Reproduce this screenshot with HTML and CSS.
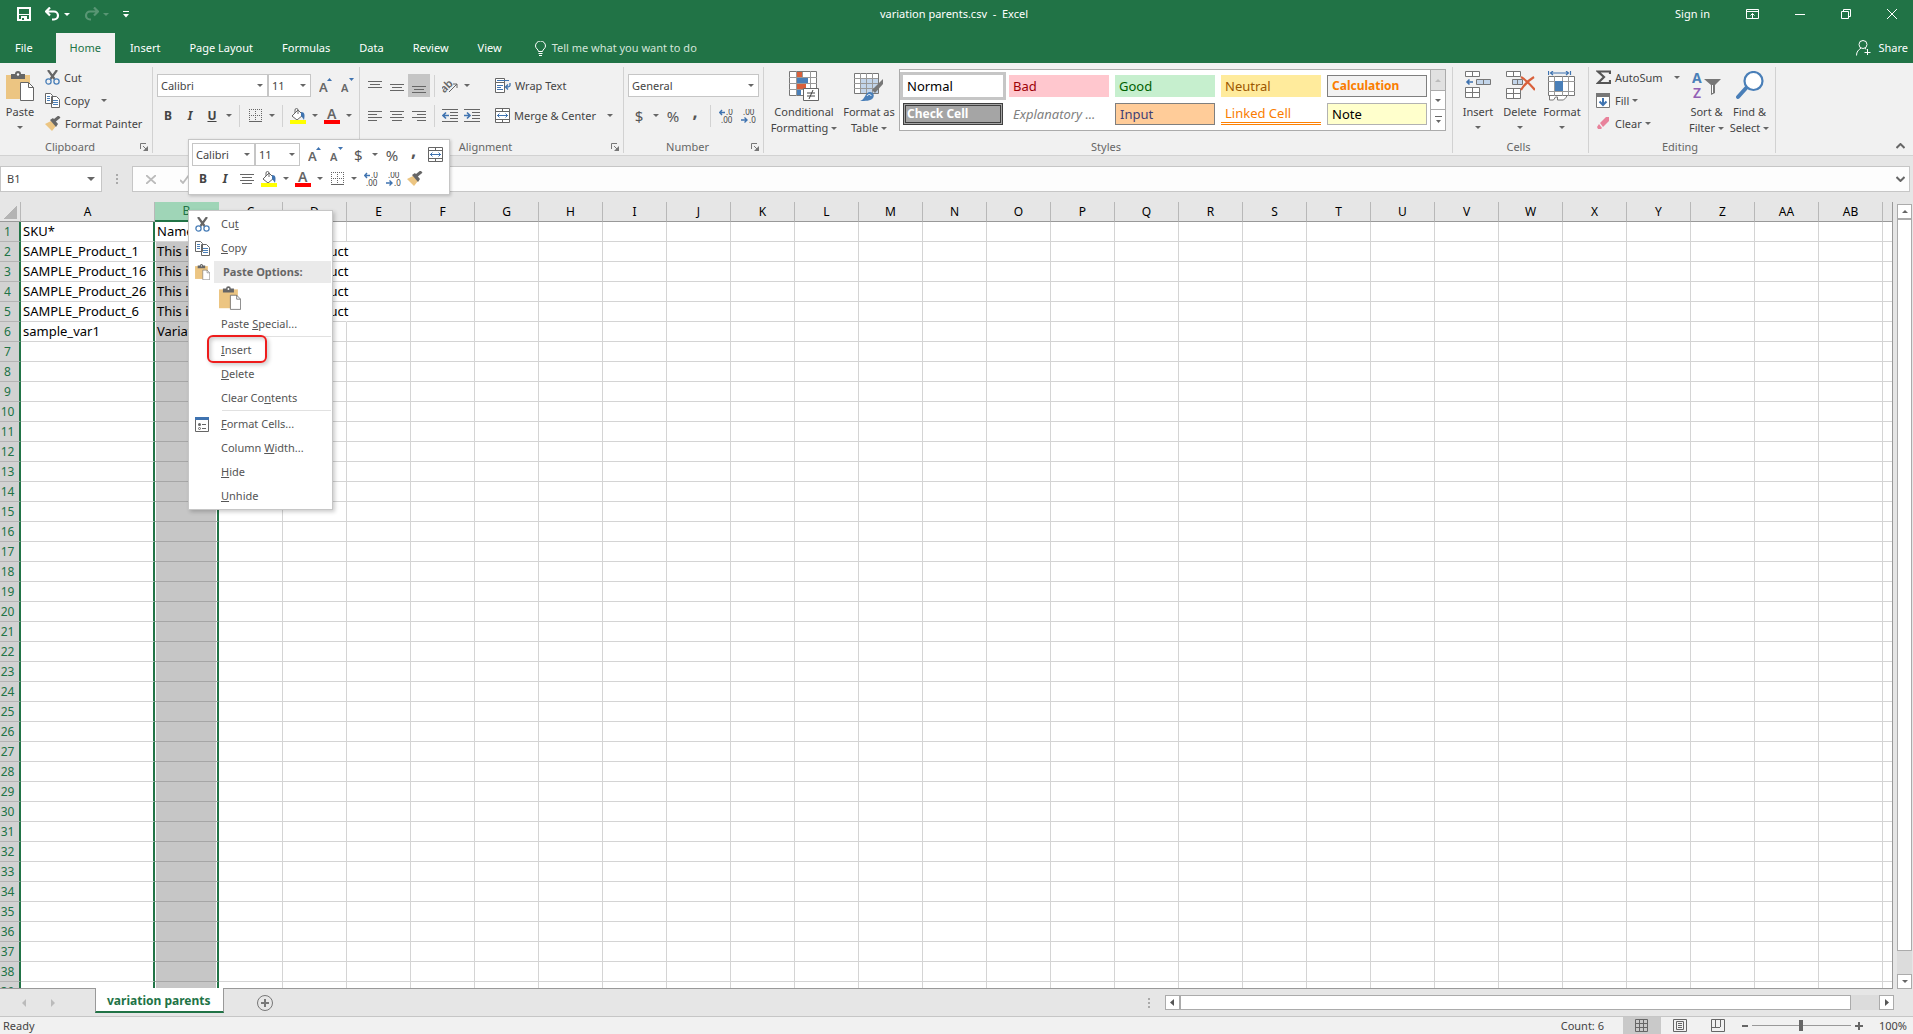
FILE: index.html
```html
<!DOCTYPE html>
<html lang="en">
<head>
  <meta charset="UTF-8">
  <meta name="viewport" content="width=device-width, initial-scale=1.0">
  <title>variation parents.csv - Excel</title>
  <link rel="stylesheet" href="styles.css">
</head>
<body>

<!-- shared icons -->
<svg class="sprite" aria-hidden="true">
  <symbol id="i-cut" viewBox="0 0 15 15"><path d="M3 0l6.500 9M12 0L5.500 9" stroke="#666" stroke-width="2.200" fill="none"/><circle cx="3.500" cy="11.500" r="2.600" fill="none" stroke="#4a7fb8" stroke-width="1.300"/><circle cx="11.500" cy="11.500" r="2.600" fill="none" stroke="#4a7fb8" stroke-width="1.300"/></symbol>
  <symbol id="i-copy" viewBox="0 0 15 15"><path d="M.5.500h5l2 2v8h-7zM6.500 3.500h5l3 3v8h-8z" fill="#fff" stroke="#666"/><path d="M2 3.500h3M2 5.500h3M2 7.500h3M8 7.500h5M8 9.500h5M8 11.500h5" stroke="#4a7fb8"/></symbol>
  <symbol id="i-paste" viewBox="0 0 28 30"><path d="M0 4h24v24H0z" fill="#ecc582"/><path d="M5 3h4a3 3 0 0 1 6 0h4v5H5z" fill="#666"/><circle cx="12" cy="3.500" r="1.200" fill="#fff"/><path d="M14.500 11.500h8l5 5v13h-13z" fill="#fff" stroke="#666"/><path d="M22.500 11.500v5h5" fill="none" stroke="#666"/></symbol>
  <symbol id="i-brush" viewBox="0 0 16 15"><path d="M0 8l6-3 5 5-4 5z" fill="#ecc582"/><path d="M5 4l3-2 5 6-2 3z" fill="#666"/><path d="M9 5l5.500-4.500" stroke="#666" stroke-width="3"/></symbol>
  <symbol id="i-launch" viewBox="0 0 8 8"><path d="M.5 6V.5H6" fill="none" stroke="#777"/><path d="M3 3l3 3" stroke="#777"/><path d="M8 3v5H3z" fill="#777"/></symbol>
  <symbol id="i-grow" viewBox="0 0 14 15"><text x="0" y="14" font-size="13" font-weight="600" fill="#666">A</text><path d="M8 3h5l-2.500-3z" fill="#3f73b0"/></symbol>
  <symbol id="i-shrink" viewBox="0 0 14 15"><text x="0" y="14" font-size="11" font-weight="600" fill="#666">A</text><path d="M8 0h5l-2.500 3z" fill="#3f73b0"/></symbol>
  <symbol id="i-border" viewBox="0 0 13 13"><path d="M.5 0v13M6.500 0v13M12.500 0v13M0 .5h13M0 6.500h13" stroke="#666" stroke-dasharray="1 1" fill="none"/><path d="M0 12.500h13" stroke="#666"/></symbol>
  <symbol id="i-fill" viewBox="0 0 16 16"><path d="M2 8l6-6 5 5-6 5z" fill="#fff" stroke="#666"/><path d="M5 5V2a1.500 1.500 0 0 1 3 0v4" fill="none" stroke="#666"/><path d="M11 4c4 0 4 3 3 8-1-2-2-3-3-4z" fill="#3f73b0"/><path d="M0 12h16v4H0z" fill="#ff0"/></symbol>
  <symbol id="i-color" viewBox="0 0 16 16"><text x="3" y="11" font-size="14" font-weight="600" fill="#666">A</text><path d="M0 12h16v4H0z" fill="#f00"/></symbol>
  <symbol id="i-top" viewBox="0 0 14 14"><path d="M0 3.500h14M2 6.500h10M0 9.500h14" stroke="#666"/></symbol>
  <symbol id="i-bottom" viewBox="0 0 14 14"><path d="M0 6.500h14M2 9.500h10M0 12.500h14" stroke="#666"/></symbol>
  <symbol id="i-left" viewBox="0 0 14 14"><path d="M0 2.500h14M0 5.500h9M0 8.500h14M0 11.500h9" stroke="#666"/></symbol>
  <symbol id="i-center" viewBox="0 0 14 14"><path d="M0 2.500h14M2 5.500h10M0 8.500h14M2 11.500h10" stroke="#666"/></symbol>
  <symbol id="i-right" viewBox="0 0 14 14"><path d="M0 2.500h14M5 5.500h9M0 8.500h14M5 11.500h9" stroke="#666"/></symbol>
  <symbol id="i-orient" viewBox="0 0 16 15"><text x="-3" y="11" font-size="11" font-weight="600" fill="#666" transform="rotate(-45 5 7)">ab</text><path d="M7 14l8-8M11 6h4v4" stroke="#666" fill="none"/></symbol>
  <symbol id="i-outdent" viewBox="0 0 16 13"><path d="M0 .5h16M8 3.500h8M8 6.500h8M8 9.500h8M0 12.500h16" stroke="#666"/><path d="M7 6.500H1M4 3.500l-3 3 3 3" stroke="#3f73b0" stroke-width="1.600" fill="none"/></symbol>
  <symbol id="i-indent" viewBox="0 0 16 13"><path d="M0 .5h16M8 3.500h8M8 6.500h8M8 9.500h8M0 12.500h16" stroke="#666"/><path d="M0 6.500h6M3 3.500l3 3-3 3" stroke="#3f73b0" stroke-width="1.600" fill="none"/></symbol>
  <symbol id="i-wrap" viewBox="0 0 16 15"><path d="M.5.500h9v4h-9zM.5 4.500h9v10h-9z" fill="#fff" stroke="#666"/><path d="M2 2.500h12M2 7.500h6M2 9.500h4M2 11.500h6" stroke="#3f73b0"/><path d="M15 5v2.500c0 1-1 1.500-4 1.500M13 6.500L10.500 9l2.500 2.500" stroke="#3f73b0" fill="none" stroke-width="1.300"/></symbol>
  <symbol id="i-merge" viewBox="0 0 15 15"><path d="M.5.500h14v14H.5zM.5 3.500h14M.5 11.500h14M7.500 0v3M7.500 12v3" fill="#fff" stroke="#666"/><path d="M2 7.500h11M4.500 5.500l-2 2 2 2M10.500 5.500l2 2-2 2" stroke="#3f73b0" fill="none"/></symbol>
  <symbol id="i-incdec" viewBox="0 0 15 14"><text x="7" y="6" font-size="8" fill="#444">.0</text><text x="2" y="14" font-size="8" fill="#444">.00</text><path d="M6 3.500H1M3 1L.8 3.500 3 6" stroke="#3f73b0" stroke-width="1.400" fill="none"/></symbol>
  <symbol id="i-decdec" viewBox="0 0 15 14"><text x="2" y="6" font-size="8" fill="#444">.00</text><text x="8" y="14" font-size="8" fill="#444">.0</text><path d="M0 11h5.500M3.500 8.500L6 11l-2.500 2.500" stroke="#3f73b0" stroke-width="1.400" fill="none"/></symbol>
</svg>

<header class="top">
  <div class="titlebar">
    <div class="quick">
      <button aria-label="Save"><svg width="14" height="14"><path d="M1 1h12v12H1z" fill="none" stroke="#fff" stroke-width="2"/><path d="M2 7h10v1H2zM4 9h6v4H4z" fill="#fff"/><path d="M5 11h2v2H5z" fill="#217346"/></svg></button>
      <button class="split" aria-label="Undo"><svg width="15" height="14"><path d="M1 4.500h8a4 4 0 0 1 0 8H7M5 .5L1 4.500l4 4" fill="none" stroke="#fff" stroke-width="2.200"/></svg><i class="caret"></i></button>
      <button class="split faded" aria-label="Redo"><svg width="15" height="14"><path d="M14 4.500H6a4 4 0 0 0 0 8h1M10 .5l4 4-4 4" fill="none" stroke="#fff" stroke-width="2.200"/></svg><i class="caret"></i></button>
      <button aria-label="Customize Quick Access Toolbar"><svg width="6" height="7"><path d="M0 .5h6" stroke="#fff"/><path d="M0 3h6L3 6.500z" fill="#fff"/></svg></button>
    </div>
    <h1>variation parents.csv&nbsp; -&nbsp; Excel</h1>
    <div class="window">
      <a href="#signin">Sign in</a>
      <button aria-label="Ribbon Display Options"><svg width="13" height="10"><path d="M.5.500h12v9H.5zM0 2.500h13M6.500 9V4.500M4.500 6.500l2-2 2 2" fill="none" stroke="#fff"/></svg></button>
      <button aria-label="Minimize"><svg width="10" height="10"><path d="M0 5.500h10" stroke="#fff"/></svg></button>
      <button aria-label="Restore"><svg width="10" height="10"><path d="M.5 2.500h7v7h-7zM2.500 2V.5h7v7H8" fill="none" stroke="#fff"/></svg></button>
      <button aria-label="Close"><svg width="10" height="10"><path d="M0 0l10 10M10 0L0 10" stroke="#fff"/></svg></button>
    </div>
  </div>
  <nav class="tabs">
    <a class="file" href="#file">File</a>
    <a class="active" href="#home">Home</a>
    <a href="#insert">Insert</a>
    <a href="#layout">Page Layout</a>
    <a href="#formulas">Formulas</a>
    <a href="#data">Data</a>
    <a href="#review">Review</a>
    <a href="#view">View</a>
    <a class="tell" href="#tell"><svg width="11" height="15"><path d="M3.500 10.500c0-2-3-3-3-5.500a5 5 0 0 1 10 0c0 2.500-3 3.500-3 5.500zM3.500 12.500h4M4 14.500h3" fill="none" stroke="#fff"/></svg>Tell me what you want to do</a>
    <a class="share" href="#share"><svg width="15" height="16"><circle cx="7" cy="4.500" r="4" fill="none" stroke="#fff"/><path d="M.5 15.500c0-4 2-5.500 4.500-7.500M9 8l1 1.500M11.500 9v6M8.500 12.500h6" fill="none" stroke="#fff"/></svg>Share</a>
  </nav>
</header>

<section class="ribbon">
  <div class="group clipboard">
    <div class="tools">
      <button class="big"><svg width="28" height="30"><use href="#i-paste"/></svg>Paste<i class="caret"></i></button>
      <div class="stack">
        <button class="small"><svg width="15" height="15"><use href="#i-cut"/></svg>Cut</button>
        <button class="small"><svg width="15" height="15"><use href="#i-copy"/></svg>Copy<i class="caret far"></i></button>
        <button class="small"><svg width="16" height="15"><use href="#i-brush"/></svg>Format Painter</button>
      </div>
    </div>
    <div class="caption"><span>Clipboard</span><button aria-label="Clipboard settings"><svg width="8" height="8"><use href="#i-launch"/></svg></button></div>
  </div>

  <div class="group font">
    <div class="tools rows">
      <div class="row">
        <span class="combo face"><select aria-label="Font"><option>Calibri</option></select></span>
        <span class="combo size"><select aria-label="Font size"><option>11</option></select></span>
        <button class="icon first" aria-label="Increase font size"><svg width="14" height="15"><use href="#i-grow"/></svg></button>
        <button class="icon" aria-label="Decrease font size"><svg width="14" height="15"><use href="#i-shrink"/></svg></button>
      </div>
      <div class="row">
        <button class="icon"><b>B</b></button>
        <button class="icon"><b><em>I</em></b></button>
        <button class="icon"><b><u>U</u></b></button>
        <button class="drop" aria-label="Underline style"><i class="caret"></i></button>
        <i class="line"></i>
        <button class="icon" aria-label="Borders"><svg width="13" height="13"><use href="#i-border"/></svg></button>
        <button class="drop" aria-label="Border styles"><i class="caret"></i></button>
        <i class="line"></i>
        <button class="icon" aria-label="Fill color"><svg width="16" height="16"><use href="#i-fill"/></svg></button>
        <button class="drop" aria-label="Fill colors"><i class="caret"></i></button>
        <button class="icon" aria-label="Font color"><svg width="16" height="16"><use href="#i-color"/></svg></button>
        <button class="drop" aria-label="Font colors"><i class="caret"></i></button>
      </div>
    </div>
  </div>

  <div class="group alignment">
    <div class="tools">
      <div class="rows left">
        <div class="row">
          <button class="icon" aria-label="Top align"><svg width="14" height="14"><use href="#i-top" y="-1"/></svg></button>
          <button class="icon" aria-label="Middle align"><svg width="14" height="14"><use href="#i-top" y="2"/></svg></button>
          <button class="icon on" aria-label="Bottom align"><svg width="14" height="14"><use href="#i-bottom" y="1"/></svg></button>
          <i class="line"></i>
          <button class="icon" aria-label="Orientation"><svg width="16" height="15"><use href="#i-orient"/></svg></button>
          <button class="drop" aria-label="Orientation options"><i class="caret"></i></button>
        </div>
        <div class="row">
          <button class="icon" aria-label="Align left"><svg width="14" height="14"><use href="#i-left"/></svg></button>
          <button class="icon" aria-label="Center"><svg width="14" height="14"><use href="#i-center"/></svg></button>
          <button class="icon" aria-label="Align right"><svg width="14" height="14"><use href="#i-right"/></svg></button>
          <i class="line"></i>
          <button class="icon" aria-label="Decrease indent"><svg width="16" height="13"><use href="#i-outdent"/></svg></button>
          <button class="icon" aria-label="Increase indent"><svg width="16" height="13"><use href="#i-indent"/></svg></button>
        </div>
      </div>
      <div class="rows wide">
        <div class="row"><button class="small"><svg width="16" height="15"><use href="#i-wrap"/></svg>Wrap Text</button></div>
        <div class="row"><button class="small"><svg width="15" height="15"><use href="#i-merge"/></svg>Merge &amp; Center<i class="caret far"></i></button></div>
      </div>
    </div>
    <div class="caption"><span>Alignment</span><button aria-label="Alignment settings"><svg width="8" height="8"><use href="#i-launch"/></svg></button></div>
  </div>

  <div class="group number">
    <div class="tools rows">
      <div class="row"><span class="combo format"><select aria-label="Number format"><option>General</option></select></span></div>
      <div class="row">
        <button class="icon sign">$</button>
        <button class="drop" aria-label="Currencies"><i class="caret"></i></button>
        <button class="icon sign">%</button>
        <button class="icon sign comma">,</button>
        <i class="line"></i>
        <button class="icon" aria-label="Increase decimal"><svg width="15" height="14"><use href="#i-incdec"/></svg></button>
        <button class="icon" aria-label="Decrease decimal"><svg width="15" height="14"><use href="#i-decdec"/></svg></button>
      </div>
    </div>
    <div class="caption"><span>Number</span><button aria-label="Number settings"><svg width="8" height="8"><use href="#i-launch"/></svg></button></div>
  </div>

  <div class="group styles">
    <div class="tools">
      <button class="big cond">
        <svg width="30" height="30"><path d="M.5.500h27v24H.5z" fill="#fff" stroke="#777"/><path d="M8 1h6v6H8zM8 13h9v6H8z" fill="#d9603b"/><path d="M8 7h11v6H8zM8 19h4v5H8z" fill="#4a7fb8"/><path d="M7.500 0v25M13.500 1v5M21.500 0v25M0 6.500h28M0 12.500h28M0 18.500h28" stroke="#999" fill="none"/><path d="M14.500 17.500h15v12h-15z" fill="#fff" stroke="#666"/><path d="M18 22h8M18 25h8M24 19l-4 9" stroke="#444"/></svg>
        <span>Conditional<br>Formatting<i class="caret"></i></span>
      </button>
      <button class="big table">
        <svg width="30" height="30"><path d="M.5 2.500h24v20H.5z" fill="#fff" stroke="#777"/><path d="M7 8h17v14H7z" fill="#c3d5ea"/><path d="M6.500 2v20M12.500 2v20M18.500 2v20M0 7.500h24M0 12.500h24M0 17.500h24" stroke="#999" fill="none"/><path d="M29 8v5l-8 9-3-3z" fill="#777"/><path d="M6 30c5-1 5-9 10-9 3 0 5 3 3 6-2 3-8 3-13 3z" fill="#4a7fb8"/><path d="M13 25c1-2 4-2 4 0" fill="none" stroke="#fff"/></svg>
        <span>Format as<br>Table<i class="caret"></i></span>
      </button>
      <div class="gallery">
        <div class="swatches">
          <button class="normal">Normal</button>
          <button class="bad">Bad</button>
          <button class="good">Good</button>
          <button class="neutral">Neutral</button>
          <button class="calc">Calculation</button>
          <button class="check">Check Cell</button>
          <button class="explain">Explanatory ...</button>
          <button class="input">Input</button>
          <button class="linked">Linked Cell</button>
          <button class="note">Note</button>
        </div>
        <div class="pager">
          <button class="dim" aria-label="Previous styles"><i class="caret up"></i></button>
          <button aria-label="Next styles"><i class="caret"></i></button>
          <button aria-label="More styles"><svg width="7" height="8"><path d="M0 .5h7" stroke="#666"/><path d="M1 4h5L3.500 7z" fill="#666"/></svg></button>
        </div>
      </div>
    </div>
    <div class="caption"><span>Styles</span></div>
  </div>

  <div class="group cells">
    <div class="tools">
      <button class="big">
        <svg width="28" height="30"><path d="M1.500.500h14v5h-14zM8.500.500v5M1.500 16.500h14v10h-14zM8.500 16.500v10M1.500 21.500h14" fill="#fff" stroke="#777"/><path d="M12.500 8.500h14v5h-14zM19.500 8.500v5" fill="#c3d5ea" stroke="#777"/><path d="M9 11H3M5.500 8.500L3 11l2.500 2.500" fill="none" stroke="#3f73b0" stroke-width="1.600"/></svg>
        Insert<i class="caret"></i>
      </button>
      <button class="big">
        <svg width="30" height="30"><path d="M1.500.500h14v5h-14zM8.500.500v5M1.500 17.500h14v10h-14zM8.500 17.500v10M1.500 22.500h14" fill="#fff" stroke="#777"/><path d="M7.500 8.500h10v5h-10zM12.500 8.500v5" fill="#c3d5ea" stroke="#777"/><path d="M16 6c5 3 10 8 14 13M29 6c-5 3-10 8-13 13" stroke="#d9603b" stroke-width="2.200" fill="none"/></svg>
        Delete<i class="caret"></i>
      </button>
      <button class="big">
        <svg width="28" height="30"><path d="M.5 0v4M22.500 0v4M2 2h19M5 0L2.500 2 5 4M18 0l2.500 2L18 4" fill="none" stroke="#3f73b0" stroke-width="1.200"/><path d="M.5 5.500h26v19H.5z" fill="#fff" stroke="#777"/><path d="M6.500 5v20M14.500 5v20M20.500 5v20M0 10.500h27M0 20.500h27" stroke="#999" fill="none"/><path d="M7 10h8v10H7z" fill="#4a7fb8"/><path d="M1.500 25v4h4l2-3h2v3h6l3-3v-1" fill="#fff" stroke="#777"/></svg>
        Format<i class="caret"></i>
      </button>
    </div>
    <div class="caption"><span>Cells</span></div>
  </div>

  <div class="group editing">
    <div class="tools">
      <div class="stack">
        <button class="small"><svg width="15" height="15"><path d="M14 4V1.500H2L8 7l-6 6h12v-3" fill="none" stroke="#555" stroke-width="2.200"/></svg>AutoSum<i class="caret far"></i></button>
        <button class="small"><svg width="15" height="15"><path d="M.5.500h13v14H.5z" fill="#fff" stroke="#777"/><path d="M0 0h14v4H0z" fill="#777"/><path d="M7 5v7M3.500 8.500L7 12l3.500-3.500" fill="none" stroke="#3f73b0" stroke-width="2"/></svg>Fill<i class="caret near"></i></button>
        <button class="small"><svg width="15" height="15"><path d="M4 7l6-6h3v4L7 11z" fill="#e8829b"/><path d="M3 8l3 4-1 1H2l-1-2z" fill="#e8829b"/></svg>Clear<i class="caret near"></i></button>
      </div>
      <button class="big">
        <svg width="30" height="30"><text x="0" y="12" font-size="14" font-weight="700" fill="#4a7fb8">A</text><text x="1" y="27" font-size="14" font-weight="600" fill="#9260b5">Z</text><path d="M12 8h17l-6 6v8l-4 2V14z" fill="#777"/><path d="M20.500 14v8" stroke="#fff"/></svg>
        <span>Sort &amp;<br>Filter<i class="caret"></i></span>
      </button>
      <button class="big">
        <svg width="28" height="30"><path d="M2 26L11 16" stroke="#4a7fb8" stroke-width="4" stroke-linecap="round"/><circle cx="17.500" cy="10" r="9" fill="#fff" stroke="#4a7fb8" stroke-width="2.200"/></svg>
        <span>Find &amp;<br>Select<i class="caret"></i></span>
      </button>
    </div>
    <div class="caption"><span>Editing</span></div>
  </div>

  <button class="collapse" aria-label="Collapse the ribbon"><svg width="9" height="6"><path d="M.5 5l4-4 4 4" fill="none" stroke="#666" stroke-width="2"/></svg></button>
</section>

<section class="formula">
  <span class="combo name"><select aria-label="Name box"><option>B1</option></select></span>
  <i class="grip"></i>
  <div class="entry">
    <button aria-label="Cancel"><svg width="10" height="9"><path d="M0 0l10 9M10 0L0 9" stroke="#bbb" stroke-width="1.800"/></svg></button>
    <button aria-label="Enter"><svg width="10" height="9"><path d="M0 5l3 3 6-8" fill="none" stroke="#bbb" stroke-width="1.800"/></svg></button>
    <input type="text" aria-label="Formula bar">
    <button aria-label="Expand formula bar"><svg width="9" height="6"><path d="M.5 1l4 4 4-4" fill="none" stroke="#666" stroke-width="2"/></svg></button>
  </div>
</section>

<main class="sheet">
  <div class="grid"><table id="cells"></table></div>
  <div class="vscroll">
    <button aria-label="Scroll up"><i class="caret up"></i></button>
    <div class="track"><div class="thumb"></div></div>
    <button aria-label="Scroll down"><i class="caret"></i></button>
  </div>
</main>

<section class="sheetbar">
  <div class="nav">
    <button aria-label="Previous sheet"><svg width="4" height="8"><path d="M4 0v8L0 4z" fill="#bbb"/></svg></button>
    <button aria-label="Next sheet"><svg width="4" height="8"><path d="M0 0v8l4-4z" fill="#bbb"/></svg></button>
  </div>
  <button class="tab">variation parents</button>
  <button class="add" aria-label="New sheet"><svg width="16" height="16"><circle cx="8" cy="8" r="7.500" fill="none" stroke="#777"/><path d="M8 4v8M4 8h8" stroke="#777" stroke-width="2"/></svg></button>
  <i class="grip"></i>
  <div class="hscroll">
    <button aria-label="Scroll left"><svg width="4" height="7"><path d="M4 0v7L0 3.500z" fill="#555"/></svg></button>
    <div class="track"><div class="thumb"></div></div>
    <button aria-label="Scroll right"><svg width="4" height="7"><path d="M0 0v7l4-3.500z" fill="#555"/></svg></button>
  </div>
</section>

<footer class="status">
  <span>Ready</span>
  <span class="count">Count: 6</span>
  <button class="view on" aria-label="Normal view"><svg width="13" height="13"><path d="M.5.500h12v12H.5zM4.500 0v13M8.500 0v13M0 4.500h13M0 8.500h13" fill="none" stroke="#666"/></svg></button>
  <button class="view" aria-label="Page layout view"><svg width="14" height="13"><path d="M.5.500h13v12H.5zM3.500 2.500h7v8h-7zM5 4.500h4M5 6.500h4M5 8.500h4" fill="none" stroke="#666"/></svg></button>
  <button class="view" aria-label="Page break view"><svg width="14" height="13"><path d="M.5.500h13v12H.5zM4.500 0v8M9.500 0v8M0 8.500h9" fill="none" stroke="#666"/></svg></button>
  <div class="zoom">
    <button aria-label="Zoom out"><svg width="6" height="8"><path d="M0 4h6" stroke="#666" stroke-width="2"/></svg></button>
    <input type="range" min="0" max="100" value="50" aria-label="Zoom">
    <button aria-label="Zoom in"><svg width="8" height="8"><path d="M0 4h8M4 0v8" stroke="#666" stroke-width="2"/></svg></button>
    <span>100%</span>
  </div>
</footer>

<!-- floating format toolbar -->
<div class="mini">
  <div class="row">
    <span class="combo face"><select aria-label="Font"><option>Calibri</option></select></span>
    <span class="combo size"><select aria-label="Font size"><option>11</option></select></span>
    <button class="icon first" aria-label="Increase font size"><svg width="14" height="15"><use href="#i-grow"/></svg></button>
    <button class="icon" aria-label="Decrease font size"><svg width="14" height="15"><use href="#i-shrink"/></svg></button>
    <button class="icon sign">$</button>
    <button class="drop" aria-label="Currencies"><i class="caret"></i></button>
    <button class="icon sign">%</button>
    <button class="icon sign comma">,</button>
    <button class="icon" aria-label="Merge and center"><svg width="15" height="15"><use href="#i-merge"/></svg></button>
  </div>
  <div class="row">
    <button class="icon"><b>B</b></button>
    <button class="icon"><b><em>I</em></b></button>
    <button class="icon" aria-label="Center"><svg width="14" height="14"><use href="#i-center"/></svg></button>
    <button class="icon" aria-label="Fill color"><svg width="16" height="16"><use href="#i-fill"/></svg></button>
    <button class="drop" aria-label="Fill colors"><i class="caret"></i></button>
    <button class="icon" aria-label="Font color"><svg width="16" height="16"><use href="#i-color"/></svg></button>
    <button class="drop" aria-label="Font colors"><i class="caret"></i></button>
    <button class="icon" aria-label="Borders"><svg width="13" height="13"><use href="#i-border"/></svg></button>
    <button class="drop" aria-label="Border styles"><i class="caret"></i></button>
    <button class="icon" aria-label="Increase decimal"><svg width="15" height="14"><use href="#i-incdec"/></svg></button>
    <button class="icon" aria-label="Decrease decimal"><svg width="15" height="14"><use href="#i-decdec"/></svg></button>
    <button class="icon" aria-label="Format painter"><svg width="16" height="15"><use href="#i-brush"/></svg></button>
  </div>
</div>

<!-- column context menu -->
<div class="menu">
  <button><svg width="15" height="15"><use href="#i-cut"/></svg><span>Cu<u>t</u></span></button>
  <button><svg width="15" height="15"><use href="#i-copy"/></svg><span><u>C</u>opy</span></button>
  <div class="heading"><svg width="15" height="16"><use href="#i-paste"/></svg><span>Paste Options:</span></div>
  <button class="option" aria-label="Paste"><svg width="22" height="24"><use href="#i-paste"/></svg></button>
  <button><span>Paste <u>S</u>pecial...</span></button>
  <hr>
  <button class="marked"><span><u>I</u>nsert</span></button>
  <button><span><u>D</u>elete</span></button>
  <button><span>Clear Co<u>n</u>tents</span></button>
  <hr>
  <button><svg width="14" height="15"><path d="M.5.500h13v14H.5z" fill="#fff" stroke="#666"/><path d="M0 0h14v3H0z" fill="#3f73b0"/><path d="M7 7.500h4M7 11.500h4" stroke="#666"/><circle cx="4.500" cy="7.500" r="1.500" fill="#666"/><circle cx="4.500" cy="11.500" r="1" fill="none" stroke="#666"/></svg><span><u>F</u>ormat Cells...</span></button>
  <button><span>Column <u>W</u>idth...</span></button>
  <button><span><u>H</u>ide</span></button>
  <button><span><u>U</u>nhide</span></button>
</div>

<script src="script.js"></script>
</body>
</html>
```
FILE: styles.css
```css
*, *::after {
  box-sizing: border-box;
}
body {
  margin: 0;
  height: 100vh;
  display: flex;
  flex-direction: column;
  overflow: hidden;
  background: #e6e6e6;
  color: #444;
  font: 11px/16px "Noto Sans", "Open Sans", sans-serif;
}
button, select, input {
  font: inherit;
  color: inherit;
  background: none;
  border: 0;
  padding: 0;
  margin: 0;
}
button {
  display: flex;
  align-items: center;
  justify-content: center;
}
a {
  color: inherit;
  text-decoration: none;
}
svg {
  flex: none;
}
.sprite {
  display: none;
}
.caret {
  flex: none;
  width: 0;
  height: 0;
  border: 3px solid transparent;
  border-top-color: #666;
  border-bottom: 0;
}
.caret.up {
  border-top: 0;
  border-bottom: 3px solid #666;
}

/* title bar and tabs */
.top {
  background: #217346;
  color: #fff;
}
.titlebar {
  height: 33px;
  padding: 0 5px 5px 0;
  display: grid;
  grid-template-columns: 1fr auto 1fr;
  align-items: center;
}
.titlebar h1 {
  margin: 0;
  font-size: 11px;
  font-weight: normal;
}
.quick {
  display: flex;
  align-items: center;
  gap: 14px;
  padding-left: 17px;
}
.quick .split {
  gap: 4px;
}
.quick .caret {
  border-top-color: #fff;
}
.faded {
  opacity: 0.25;
}
.window {
  display: flex;
  justify-content: flex-end;
  align-items: center;
  gap: 36px;
  padding-right: 11px;
}
.tabs {
  height: 30px;
  display: flex;
  gap: 1px;
}
.tabs a {
  display: flex;
  align-items: center;
  padding: 0 14px;
}
.tabs .file {
  padding: 0 22px 0 15px;
}
.tabs .active {
  background: #f1f1f1;
  color: #217346;
}
.tabs .tell {
  gap: 6px;
  padding-left: 18px;
  color: #d3e5da;
}
.tabs .share {
  gap: 7px;
  margin-left: auto;
  padding-right: 5px;
}

/* ribbon */
.ribbon {
  display: flex;
  padding: 4px 0 2px;
  background: #f1f1f1;
  border-bottom: 1px solid #d2d2d2;
}
.group {
  flex: none;
  border-right: 1px solid #d2d2d2;
}
.clipboard { width: 153px; }
.font { width: 207px; }
.alignment { width: 264px; }
.number { width: 140px; }
.styles { width: 689px; }
.cells { width: 136px; }
.editing { width: 187px; }
.tools {
  display: flex;
  height: 73px;
}
.caption {
  display: flex;
  align-items: center;
  height: 13px;
  padding-right: 4px;
  line-height: 13px;
  color: #666;
}
.caption span {
  flex: 1;
  text-align: center;
}
.big {
  flex-direction: column;
  justify-content: flex-start;
  padding-top: 4px;
  line-height: 16px;
}
.big svg {
  margin-bottom: 3px;
}
.big > .caret {
  margin-top: 6px;
}
.big span .caret {
  display: inline-block;
  vertical-align: 2px;
  margin-left: 3px;
}
.stack {
  display: flex;
  flex-direction: column;
  margin-top: -1px;
}
.small {
  justify-content: flex-start;
  gap: 4px;
  height: 23px;
}
.caret.far {
  margin-left: 7px;
}
.clipboard .big {
  width: 40px;
}
.clipboard .stack {
  padding-left: 5px;
}
.rows {
  display: flex;
  flex-direction: column;
  gap: 7px;
  padding: 7px 0 0 4px;
}
.row {
  display: flex;
  align-items: center;
  height: 23px;
}
.icon {
  width: 22px;
  height: 23px;
}
.icon b {
  font-size: 12px;
}
.icon.on {
  background: #c5c5c5;
}
.icon.sign {
  font-size: 15px;
  color: #555;
}
.icon.comma {
  padding-bottom: 10px;
  font-size: 18px;
  font-weight: bold;
}
.drop {
  width: 12px;
  height: 23px;
}
.line {
  width: 1px;
  height: 22px;
  margin: 0 4px;
  background: #d2d2d2;
}
.combo {
  position: relative;
  display: block;
  height: 23px;
  background: #fff;
  border: 1px solid #c6c6c6;
}
.combo select {
  appearance: none;
  width: 100%;
  height: 100%;
  padding-left: 3px;
}
.combo::after {
  content: "";
  position: absolute;
  right: 4px;
  top: 9px;
  border: 3px solid transparent;
  border-top-color: #666;
  border-bottom: 0;
  pointer-events: none;
}
.font .face { width: 111px; }
.font .size { width: 43px; }
.format { width: 131px; }
.combo + .first {
  margin-left: 4px;
}
.alignment .wide {
  margin-left: 2px;
  padding-left: 9px;
}
.alignment .left {
  width: 124px;
}

.styles .big {
  width: 62px;
}
.styles .cond {
  width: 68px;
  margin-left: 6px;
}
.gallery {
  display: flex;
  margin: 2px 0 0 -1px;
  height: 62px;
  background: #fff;
  border: 1px solid #ababab;
}
.swatches {
  display: grid;
  grid-template-columns: repeat(5, 100px);
  gap: 6px;
  padding: 5px 3px;
}
.swatches button {
  height: 22px;
  justify-content: flex-start;
  padding-left: 4px;
  font-size: 13px;
  white-space: nowrap;
}
.swatches .normal { outline: 3px solid #c6c6c6; color: #000; }
.swatches .bad { background: #ffc7ce; color: #9c0006; }
.swatches .good { background: #c6efce; color: #006100; }
.swatches .neutral { background: #ffeb9c; color: #9c5700; }
.swatches .calc { background: #f2f2f2; color: #fa7d00; border: 1px solid #7f7f7f; font-size: 12px; font-weight: bold; }
.swatches .check { background: #a5a5a5; color: #fff; border: 3px double #3f3f3f; font-size: 12px; font-weight: bold; padding-left: 1px; }
.swatches .explain { color: #7f7f7f; font-style: italic; }
.swatches .input { background: #ffcc99; color: #3f3f76; border: 1px solid #7f7f7f; }
.swatches .linked { color: #fa7d00; border-bottom: 3px double #ff8001; }
.swatches .note { background: #ffffcc; color: #000; border: 1px solid #b2b2b2; }
.pager {
  display: grid;
  grid-template-rows: 20px 19px 21px;
  width: 15px;
  border-left: 1px solid #ababab;
}
.pager button + button {
  border-top: 1px solid #ababab;
}
.pager .dim {
  background: #e1e1e1;
}
.pager .dim .caret {
  border-bottom-color: #bbb;
}
.cells .tools {
  padding-left: 4px;
}
.cells .big {
  width: 42px;
}
.editing .tools {
  padding-left: 7px;
}
.editing .stack {
  width: 89px;
}
.editing .big {
  width: 43px;
}
.caret.near {
  margin-left: -1px;
}
.collapse {
  align-self: flex-end;
  margin: 0 8px 4px auto;
}

/* formula bar */
.formula {
  display: flex;
  align-items: center;
  gap: 14px;
  height: 46px;
  padding-right: 3px;
}
.name {
  width: 102px;
  height: 26px;
}
.name.combo select {
  padding-left: 6px;
}
.name.combo::after {
  right: 6px;
  top: 10px;
  border-width: 4px 4px 0;
}
.grip {
  width: 2px;
  height: 10px;
  background: repeating-linear-gradient(#aaa 0 2px, transparent 2px 4px);
}
.entry {
  flex: 1;
  display: flex;
  align-items: center;
  height: 26px;
  padding: 0 4px 0 13px;
  background: #fdfdfd;
  border: 1px solid #c6c6c6;
}
.entry button {
  margin-right: 24px;
}
.entry button:last-child {
  margin-right: 0;
}
.entry input {
  flex: 1;
}

/* cells */
.sheet {
  flex: 1;
  min-height: 0;
  display: flex;
}
.grid {
  flex: 1;
  overflow: hidden;
  border-bottom: 1px solid #999;
}
.grid table {
  width: 100%;
  table-layout: fixed;
  border-spacing: 0;
  background: #fff;
  color: #000;
  font-size: 12px;
  border-right: 1px solid #999;
}
.grid th, .grid td {
  height: 20px;
  padding: 0;
  line-height: 18px;
  white-space: nowrap;
}
.grid td {
  padding-left: 2px;
  font-size: 13px;
  line-height: 19px;
  border-right: 1px solid #d4d4d4;
  border-bottom: 1px solid #d4d4d4;
}
.grid thead th {
  background: #e6e6e6;
  border-right: 1px solid #b8b8b8;
  border-bottom: 1px solid #999;
  font-weight: normal;
}
.grid thead th:last-child {
  border-right: 0;
}
.grid thead .corner {
  background: linear-gradient(135deg, transparent 50%, #b4b4b4 50%) 4px 4px / 13px 13px no-repeat #e6e6e6;
}
.grid thead .picked {
  background: #9fd5b7;
  border-right-color: #9fd5b7;
  border-bottom: 2px solid #217346;
  color: #217346;
}
.grid tbody th {
  padding-right: 4px;
  background: #d2d2d2;
  border-right: 2px solid #217346;
  border-bottom: 1px solid #b4b4b4;
  color: #217346;
  font-weight: normal;
  line-height: 19px;
}
.grid .edge {
  border-right: 2px solid #217346;
}
.grid .shade {
  background: #c6c6c6;
  border-bottom-color: #a6a6a6;
  box-shadow: inset 1px 0 #fff, inset -1px 0 #fff;
}
.grid .spill {
  border-right-color: transparent;
}
.grid td:last-child {
  border-right: 0;
}
.grid .c-head { width: 21px; }
.grid .c-a { width: 134px; }
.grid .c-std { width: 64px; }
.vscroll {
  display: flex;
  flex-direction: column;
  width: 20px;
  padding: 2px 1px 0 4px;
}
.vscroll button, .hscroll button {
  flex: none;
  width: 15px;
  height: 15px;
  background: #fff;
  border: 1px solid #ababab;
}
.track {
  flex: 1;
  background: #dcdcdc;
}
.thumb {
  background: #fff;
  border: 1px solid #ababab;
}
.vscroll .thumb {
  height: 97%;
}

/* sheet tabs */
.sheetbar {
  display: flex;
  align-items: center;
  height: 27px;
  padding-right: 19px;
}
.nav {
  display: flex;
  gap: 25px;
  width: 95px;
  padding-left: 22px;
}
.tab {
  align-self: flex-start;
  z-index: 1;
  height: 25px;
  margin-top: -1px;
  padding: 3px 12px 0 11px;
  background: #fff;
  border: solid #999;
  border-width: 0 1px;
  border-bottom: 2px solid #217346;
  color: #217346;
  font-size: 12px;
  font-weight: bold;
}
.add {
  margin-left: 33px;
}
.sheetbar .grip {
  margin: 0 15px 0 auto;
}
.hscroll {
  display: flex;
  width: 38.5%;
  height: 15px;
}
.hscroll .thumb {
  width: 96%;
  height: 15px;
}

/* status bar */
.status {
  display: flex;
  align-items: center;
  height: 18px;
  padding: 0 6px 0 3px;
  background: #f1f1f1;
  border-top: 1px solid #c6c6c6;
}
.count {
  margin: 0 19px 0 auto;
}
.view {
  width: 38px;
  height: 17px;
}
.view.on {
  background: #c9c9c9;
}
.zoom {
  display: flex;
  align-items: center;
  gap: 4px;
  padding-left: 5px;
}
.zoom input {
  appearance: none;
  width: 99px;
  height: 11px;
  background: linear-gradient(#999, #999) center / 100% 1px no-repeat;
}
.zoom input::-webkit-slider-thumb {
  appearance: none;
  width: 4px;
  height: 11px;
  background: #666;
}
.zoom span {
  margin-left: 12px;
}

/* floating toolbar */
.mini {
  position: absolute;
  left: 188px;
  top: 139px;
  width: 262px;
  padding: 3px 3px 4px;
  background: #fff;
  border: 1px solid #c6c6c6;
  box-shadow: 1px 1px 3px rgba(0, 0, 0, 0.2);
}
.mini .row + .row {
  margin-top: 1px;
}
.mini .face { width: 64px; }
.mini .size { width: 46px; }

/* context menu */
.menu {
  position: absolute;
  left: 188px;
  top: 210px;
  width: 145px;
  padding: 1px;
  background: #fff;
  border: 1px solid #c6c6c6;
  box-shadow: 2px 2px 4px rgba(0, 0, 0, 0.2);
}
.menu button, .menu .heading {
  display: grid;
  grid-template-columns: 24px 1fr;
  justify-items: start;
  align-items: center;
  width: 100%;
  height: 24px;
  padding-left: 5px;
  text-align: left;
  color: #555;
}
.menu span {
  grid-column: 2;
  padding-left: 2px;
}
.menu .heading {
  grid-template-columns: 19px 1fr;
  height: 23px;
}
.menu .heading span {
  width: 100%;
  height: 22px;
  padding-left: 9px;
  line-height: 22px;
  background: #eaeaea;
  font-weight: bold;
  color: #666;
}
.menu .option {
  height: 29px;
}
.menu .option svg {
  grid-column: 2;
}
.menu hr {
  margin: 0 0 1px 32px;
  border: 0;
  border-top: 1px solid #e1e1e1;
}
.menu .marked {
  position: relative;
}
.marked::after {
  content: "";
  position: absolute;
  left: 17px;
  top: -3px;
  width: 60px;
  height: 28px;
  border: 2px solid #ee1c1c;
  border-radius: 6px;
  box-shadow: 2px 2px 4px rgba(0, 0, 0, 0.2), inset 2px 2px 4px rgba(0, 0, 0, 0.2);
}
```
FILE: script.js
```js
const ROWS = 39;
const COLS = 29;

const data = [
  ['SKU*', 'Name'],
  ['SAMPLE_Product_1', 'This is a sample parent product'],
  ['SAMPLE_Product_16', 'This is a sample parent product'],
  ['SAMPLE_Product_26', 'This is a sample parent product'],
  ['SAMPLE_Product_6', 'This is a sample parent product'],
  ['sample_var1', 'Variation']
];

function colName(i) {
  return i < 26 ? String.fromCharCode(65 + i) : 'A' + String.fromCharCode(39 + i);
}

function cellClass(row, col) {
  if (col === 0) return 'edge';
  if (col === 1) return row === 0 ? 'edge' : 'edge shade';
  // long names run over the next cells
  if (row > 0 && row < 5 && (col === 2 || col === 3)) return 'spill';
  return '';
}

let html = '<colgroup><col class="c-head"><col class="c-a">';
for (let c = 1; c < COLS - 1; c++) html += '<col class="c-std">';
html += '<col></colgroup><thead><tr><th class="corner"></th>';
for (let c = 0; c < COLS; c++) {
  html += `<th class="${c === 1 ? 'picked' : ''}">${c < COLS - 1 ? colName(c) : ''}</th>`;
}
html += '</tr></thead><tbody>';
for (let r = 0; r < ROWS; r++) {
  html += `<tr><th>${r + 1}</th>`;
  for (let c = 0; c < COLS; c++) {
    const text = data[r] && data[r][c] ? data[r][c] : '';
    html += `<td class="${cellClass(r, c)}">${text}</td>`;
  }
  html += '</tr>';
}
html += '</tbody>';
document.getElementById('cells').innerHTML = html;
```
